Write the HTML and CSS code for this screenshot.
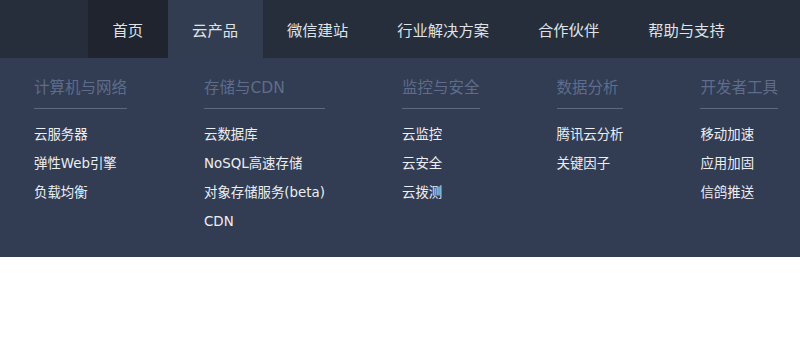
FILE: index.html
```html
<!DOCTYPE html>
<html lang="zh-CN">
<head>
<meta charset="utf-8">
<title>腾讯云</title>
<link rel="stylesheet" href="styles.css">
</head>
<body>
<div class="header">
  <nav class="nav">
    <a class="nav-item home">首页</a>
    <a class="nav-item active">云产品</a>
    <a class="nav-item">微信建站</a>
    <a class="nav-item">行业解决方案</a>
    <a class="nav-item">合作伙伴</a>
    <a class="nav-item">帮助与支持</a>
  </nav>
  <div class="dropdown">
    <div class="col">
      <div class="col-title">计算机与网络</div>
      <ul class="col-list">
        <li>云服务器</li>
        <li>弹性Web引擎</li>
        <li>负载均衡</li>
      </ul>
    </div>
    <div class="col">
      <div class="col-title">存储与CDN</div>
      <ul class="col-list">
        <li>云数据库</li>
        <li>NoSQL高速存储</li>
        <li>对象存储服务(beta)</li>
        <li>CDN</li>
      </ul>
    </div>
    <div class="col">
      <div class="col-title">监控与安全</div>
      <ul class="col-list">
        <li>云监控</li>
        <li>云安全</li>
        <li>云拨测</li>
      </ul>
    </div>
    <div class="col">
      <div class="col-title">数据分析</div>
      <ul class="col-list">
        <li>腾讯云分析</li>
        <li>关键因子</li>
      </ul>
    </div>
    <div class="col">
      <div class="col-title">开发者工具</div>
      <ul class="col-list">
        <li>移动加速</li>
        <li>应用加固</li>
        <li>信鸽推送</li>
      </ul>
    </div>
  </div>
</div>
</body>
</html>
```

FILE: styles.css
```css
* { box-sizing: border-box; }
html, body {
  margin: 0;
  padding: 0;
  background: #ffffff;
  font-family: "Noto Sans", "Noto Sans CJK SC", sans-serif;
}
.nav {
  display: flex;
  height: 58px;
  background: #272e3b;
  padding-left: 88px;
}
.nav-item {
  display: flex;
  align-items: center;
  padding: 0 24.5px;
  color: #dfe2e7;
  font-size: 15.3px;
  text-decoration: none;
  white-space: nowrap;
}
.nav-item.home {
  background: #1f242e;
}
.nav-item.active {
  background: #333d52;
}
.dropdown {
  display: flex;
  gap: 77px;
  background: #323c52;
  padding: 20px 0 21px 34px;
  height: 199px;
  font-family: "DejaVu Sans", "Noto Sans CJK SC", sans-serif;
}
.col {
  display: flex;
  flex-direction: column;
}
.col-title {
  color: #5e6d8b;
  font-size: 15.5px;
  line-height: 20px;
  padding-bottom: 10px;
  border-bottom: 1px solid #5a6882;
  white-space: nowrap;
}
.col-list {
  list-style: none;
  margin: 11px 0 0;
  padding: 0;
}
.col-list li {
  color: #eceef2;
  font-size: 13.4px;
  line-height: 29px;
  white-space: nowrap;
}
```
